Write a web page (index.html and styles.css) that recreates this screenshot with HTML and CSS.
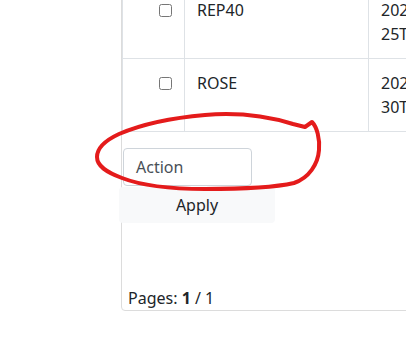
FILE: index.html
```html
<!DOCTYPE html>
<html>
<head>
<meta charset="utf-8">
<link rel="stylesheet" href="styles.css">
</head>
<body>
<div class="card">
  <table class="list">
    <tr>
      <td class="check"><input type="checkbox"></td>
      <td class="name">REP40</td>
      <td class="date">2022-01-<br>25T</td>
    </tr>
    <tr>
      <td class="check"><input type="checkbox"></td>
      <td class="name">ROSE</td>
      <td class="date">2022-01-<br>30T</td>
    </tr>
  </table>
  <div class="actions">
    <div class="select">Action</div>
    <button class="apply">Apply</button>
  </div>
  <div class="pages">Pages: <b>1</b> / 1</div>
</div>
<svg class="scribble" width="406" height="341" viewBox="0 0 406 341">
  <path d="M305 127 L312 122 C317 127 320 139 319 150 C318 164 309 178 294 183 C272 188 240 189 205 189 C170 189 140 185 122 178 C106 172 97 166 97 157 C97 148 104 141 119 134 C140 125 170 118 205 115 C240 112 270 117 293 124 L305 127" fill="none" stroke="#e41b1b" stroke-width="4" stroke-linecap="round" stroke-linejoin="round"/>
</svg>
</body>
</html>
```
FILE: styles.css
```css
html, body {
  margin: 0;
  padding: 0;
  background: #fff;
  overflow: hidden;
}
body {
  font-family: "Noto Sans", "Open Sans", sans-serif;
  font-size: 16px;
  line-height: 24px;
  color: #212529;
  position: relative;
  width: 406px;
  height: 341px;
}
.card {
  margin-left: 121px;
  margin-top: -16px;
  width: 400px;
  border: 1px solid #dcdcdc;
  border-radius: 4px;
  display: flex;
  flex-direction: column;
}
.list {
  border-collapse: collapse;
  width: 100%;
}
.list td {
  border: 1px solid #dee2e6;
  padding: 12px;
  vertical-align: top;
}
.list td.check {
  width: 37px;
  text-align: right;
}
.list td.name {
  width: 159px;
}
.check input {
  margin: 0;
  width: 13px;
  height: 13px;
  vertical-align: -1px;
}
.actions {
  padding-top: 16px;
  display: flex;
  flex-direction: column;
  align-items: flex-start;
}
.select {
  margin-left: 1px;
  width: 103px;
  height: 24px;
  padding: 6px 12px;
  border: 1px solid #ced4da;
  border-radius: 4px;
  color: #495057;
}
.apply {
  margin-left: -3px;
  margin-top: 1px;
  width: 156px;
  height: 36px;
  border: none;
  border-radius: 4px;
  background: #f8f9fa;
  color: #212529;
  font: inherit;
  padding: 0;
}
.pages {
  margin-top: 63px;
  padding: 0 6px 0;
  height: 24px;
}
.pages b {
  font-weight: 700;
}
.scribble {
  position: absolute;
  left: 0;
  top: 0;
  pointer-events: none;
}
```
